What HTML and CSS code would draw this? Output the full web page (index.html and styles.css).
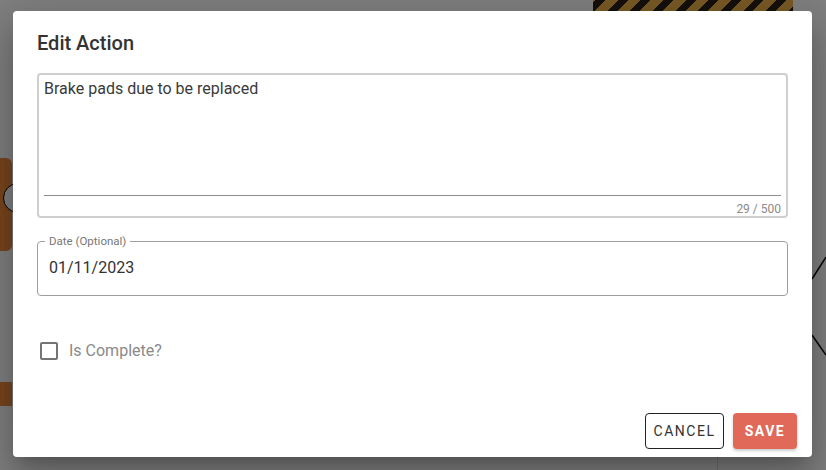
FILE: index.html
```html
<!DOCTYPE html>
<html>
<head>
<meta charset="utf-8">
<link rel="stylesheet" href="styles.css">
</head>
<body>
<div class="canvas">
  <div class="bg-stripes"></div>
  <div class="bg-card"><span class="bg-circle"></span></div>
  <div class="bg-card2"></div>
  <div class="bg-panel"></div>
  <svg class="bg-lines" width="20" height="110" viewBox="0 0 20 110"><path d="M20 0 L6 22 M6 78 L20 98" stroke="#111" stroke-width="1.5" fill="none"/></svg>
</div>
<div class="backdrop"></div>
<div class="dialog">
  <h2 class="title">Edit Action</h2>
  <div class="textarea-field">
    <div class="textarea-text">Brake pads due to be replaced</div>
    <div class="textarea-line"></div>
    <div class="counter">29 / 500</div>
  </div>
  <fieldset class="date-field">
    <legend class="date-legend">Date (Optional)</legend>
    <div class="date-value">01/11/2023</div>
  </fieldset>
  <label class="check-row">
    <span class="checkbox"></span>
    <span class="check-label">Is Complete?</span>
  </label>
  <div class="actions">
    <button class="btn btn-cancel">CANCEL</button>
    <button class="btn btn-save">SAVE</button>
  </div>
</div>
</body>
</html>
```
FILE: styles.css
```css
* { box-sizing: border-box; }
html, body { margin: 0; padding: 0; }
body {
  width: 826px;
  height: 470px;
  overflow: hidden;
  position: relative;
  font-family: Roboto, "Liberation Sans", sans-serif;
  background: #ffffff;
}
.canvas { position: absolute; inset: 0; }
.bg-stripes {
  position: absolute;
  left: 593px; top: -20px;
  width: 200px; height: 40px;
  background: repeating-linear-gradient(135deg, #2a2118 0 7px, #f0b54a 7px 16px);
}
.bg-card {
  position: absolute;
  left: -20px; top: 158px;
  width: 32px; height: 93px;
  background: #f08a3a;
  border-radius: 6px;
}
.bg-circle {
  position: absolute;
  left: 23px; top: 25px;
  width: 30px; height: 30px;
  border-radius: 50%;
  background: #fff;
  border: 1px solid #000;
}
.bg-card2 {
  position: absolute;
  left: -20px; top: 382px;
  width: 32px; height: 24px;
  background: #f08a3a;
}
.bg-panel {
  position: absolute;
  left: 717px; top: 300px;
  width: 109px; height: 170px;
  background: #fff;
  border-left: 1px solid #ddd;
}
.bg-lines { position: absolute; left: 806px; top: 257px; }
.backdrop {
  position: absolute; inset: 0;
  background: rgba(0, 0, 0, 0.5);
}
.dialog {
  position: absolute;
  left: 13px; top: 11px;
  width: 799px; height: 446px;
  background: #fff;
  border-radius: 4px;
  box-shadow: 0 11px 15px -7px rgba(0,0,0,.2), 0 24px 38px 3px rgba(0,0,0,.14), 0 9px 46px 8px rgba(0,0,0,.12);
  padding: 21px 24px 0 24px;
  display: flex;
  flex-direction: column;
}
.title {
  margin: 0;
  font-size: 20px;
  font-weight: 500;
  color: #333;
  line-height: 22px;
  letter-spacing: 0;
}
.textarea-field {
  margin-top: 19px;
  height: 145px;
  border: 2px solid #cfcfcf;
  border-radius: 4px;
  padding: 4px 5px 0 5px;
  display: flex;
  flex-direction: column;
}
.textarea-text {
  font-size: 16px;
  color: #3a3a3a;
  line-height: 20px;
  flex: 1;
}
.textarea-line {
  height: 1px;
  background: #8d8d8d;
}
.counter {
  text-align: right;
  font-size: 12px;
  color: #8a8a8a;
  line-height: 14px;
  padding-top: 6px;
}
.date-field {
  margin: 17px 0 0 0;
  height: 61px;
  border: 1px solid #9e9e9e;
  border-radius: 4px;
  padding: 0 11px;
  min-width: 0;
}
.date-legend {
  font-size: 11.5px;
  color: #777;
  padding: 0 4px;
  margin-left: -4px;
  line-height: 12px;
}
.date-value {
  font-size: 16px;
  color: #333;
  line-height: 20px;
  margin-top: 11px;
}
.check-row {
  display: flex;
  align-items: center;
  margin-top: 45px;
  margin-left: 3px;
  gap: 11px;
}
.checkbox {
  width: 18px; height: 18px;
  border: 2px solid #757575;
  border-radius: 2px;
}
.check-label {
  font-size: 16px;
  color: #8a8a8a;
  line-height: 20px;
}
.actions {
  margin-top: auto;
  margin-bottom: 8px;
  margin-right: -9px;
  display: flex;
  justify-content: flex-end;
  gap: 9px;
}
.btn {
  height: 36px;
  font-family: Roboto, "Liberation Sans", sans-serif;
  font-size: 14px;
  letter-spacing: 1.5px;
  border-radius: 4px;
  padding: 0 6px;
  cursor: pointer;
}
.btn-cancel {
  background: #fff;
  border: 1px solid #222;
  color: #333;
  font-weight: 400;
  width: 79px;
}
.btn-save {
  background: #e0695a;
  border: none;
  color: #fff;
  font-weight: 700;
  width: 64px;
  box-shadow: 0 2px 3px rgba(0,0,0,.2);
}
```
